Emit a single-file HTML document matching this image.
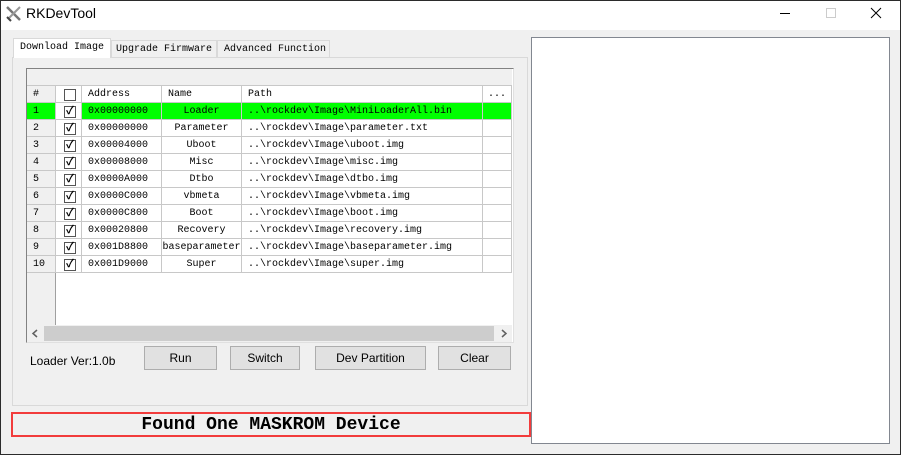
<!DOCTYPE html>
<html><head><meta charset="utf-8"><style>
*{margin:0;padding:0;box-sizing:border-box}
body{width:901px;height:455px;overflow:hidden;background:#f0f0f0;position:relative;font-family:"Liberation Sans",sans-serif}
.a{position:absolute}
.mono{font-family:"Liberation Mono","Noto Sans CJK SC",monospace;font-size:10px;color:#000}
.row{position:absolute;left:27px;width:485px;height:17px}
.c{position:absolute;top:0;height:17px;line-height:17px;border-right:1px solid #c8c8c8;border-bottom:1px solid #c8c8c8;white-space:nowrap;overflow:hidden}
.cb{position:absolute;left:9px;top:3px;width:12px;height:12px;border:1px solid #555;background:#fff;font-size:11px;line-height:10px;text-align:center;font-weight:bold}
.btn{position:absolute;top:346px;height:24px;background:#e1e1e1;border:1px solid #adadad;font-size:12px;text-align:center;line-height:22px;color:#000}
</style></head><body>
<div class="a" style="left:0;top:0;width:901px;height:455px;border:1px solid #2b2b2b"></div>
<div class="a" style="left:1px;top:1px;width:899px;height:29px;background:#fff"></div>
<svg class="a" style="left:5px;top:5px" width="18" height="18" viewBox="0 0 18 18"><path d="M2 2 L15 15" stroke="#777" stroke-width="2.5"/><path d="M15 2 L3 14" stroke="#999" stroke-width="2"/><path d="M2 12 l4 4" stroke="#444" stroke-width="2"/></svg>
<div class="a" style="left:26px;top:5px;font-size:14px;color:#000">RKDevTool</div>
<div class="a" style="left:780px;top:13px;width:10px;height:1px;background:#000"></div>
<div class="a" style="left:826px;top:8px;width:10px;height:10px;border:1px solid #ccc"></div>
<svg class="a" style="left:870px;top:7px" width="12" height="12"><path d="M1 1L11 11M11 1L1 11" stroke="#000" stroke-width="1"/></svg>
<div class="a" style="left:12px;top:57px;width:516px;height:349px;border:1px solid #d9d9d9;background:#f0f0f0"></div>
<div class="a mono" style="left:13px;top:38px;width:98px;height:20px;background:#fff;border:1px solid #d9d9d9;border-bottom:none;line-height:18px;padding-left:6px">Download Image</div>
<div class="a mono" style="left:111px;top:40px;width:106px;height:17px;border:1px solid #d9d9d9;border-bottom:none;line-height:17px;padding-left:4px">Upgrade Firmware</div>
<div class="a mono" style="left:217px;top:40px;width:113px;height:17px;border:1px solid #d9d9d9;border-bottom:none;line-height:17px;padding-left:6px">Advanced Function</div>
<div class="a" style="left:26px;top:68px;width:488px;height:275px;border:1px solid #828282;border-right-color:#e0e0e0;border-bottom-color:#e0e0e0;background:#fff"></div>
<div class="a" style="left:27px;top:69px;width:485px;height:17px;background:#f0f0f0;border-bottom:1px solid #c8c8c8"></div>
<div class="a" style="left:27px;top:86px;width:29px;height:239px;background:#f0f0f0;border-right:1px solid #a0a0a0"></div>
<div class="row mono" style="top:86px">
<div class="c" style="left:0;width:29px;padding-left:6px">#</div>
<div class="c" style="left:29px;width:26px;background:#fff"><div class="cb" style="left:8px"></div></div>
<div class="c" style="left:55px;width:80px;padding-left:6px;background:#fff">Address</div>
<div class="c" style="left:135px;width:80px;padding-left:6px;background:#fff">Name</div>
<div class="c" style="left:215px;width:241px;padding-left:6px;background:#fff">Path</div>
<div class="c" style="left:456px;width:29px;text-align:center;background:#fff">...</div>
</div>
<div id="rows"></div>
<div class="a" style="left:27px;top:325px;width:485px;height:17px;background:#f0f0f0"></div>
<div class="a" style="left:44px;top:326px;width:450px;height:15px;background:#cdcdcd"></div>
<svg class="a" style="left:31px;top:329px" width="8" height="9"><path d="M6 1L2 4.5L6 8" stroke="#606060" stroke-width="1.5" fill="none"/></svg>
<svg class="a" style="left:500px;top:329px" width="8" height="9"><path d="M2 1L6 4.5L2 8" stroke="#606060" stroke-width="1.5" fill="none"/></svg>
<div class="a" style="left:30px;top:354px;font-size:12px">Loader Ver:1.0b</div>
<div class="btn" style="left:144px;width:73px">Run</div>
<div class="btn" style="left:230px;width:70px">Switch</div>
<div class="btn" style="left:315px;width:111px">Dev Partition</div>
<div class="btn" style="left:438px;width:73px">Clear</div>
<div class="a" style="left:11px;top:412px;width:520px;height:25px;border:2px solid #f23c3c;text-align:center;font-family:'Liberation Mono',monospace;font-weight:bold;font-size:18px;line-height:23px">Found One MASKROM Device</div>
<div class="a" style="left:531px;top:37px;width:359px;height:407px;background:#fff;border:1px solid #828790"></div>
<script>
var d=[["1","0x00000000","Loader","..\\rockdev\\Image\\MiniLoaderAll.bin"],["2","0x00000000","Parameter","..\\rockdev\\Image\\parameter.txt"],["3","0x00004000","Uboot","..\\rockdev\\Image\\uboot.img"],["4","0x00008000","Misc","..\\rockdev\\Image\\misc.img"],["5","0x0000A000","Dtbo","..\\rockdev\\Image\\dtbo.img"],["6","0x0000C000","vbmeta","..\\rockdev\\Image\\vbmeta.img"],["7","0x0000C800","Boot","..\\rockdev\\Image\\boot.img"],["8","0x00020800","Recovery","..\\rockdev\\Image\\recovery.img"],["9","0x001D8800","baseparameter","..\\rockdev\\Image\\baseparameter.img"],["10","0x001D9000","Super","..\\rockdev\\Image\\super.img"]];
var h="";d.forEach(function(r,i){var bg=i==0?"#00ff00":"#fff";var bg0=i==0?"#00ff00":"#f0f0f0";
h+='<div class="row mono" style="top:'+(103+i*17)+'px">'+
'<div class="c" style="left:0;width:29px;padding-left:6px;background:'+bg0+'">'+r[0]+'</div>'+
'<div class="c" style="left:29px;width:26px;background:#fff"><div class="cb" style="left:8px">&#10003;</div></div>'+
'<div class="c" style="left:55px;width:80px;padding-left:6px;background:'+bg+'">'+r[1]+'</div>'+
'<div class="c" style="left:135px;width:80px;text-align:center;background:'+bg+'">'+r[2]+'</div>'+
'<div class="c" style="left:215px;width:241px;padding-left:6px;background:'+bg+'">'+r[3]+'</div>'+
'<div class="c" style="left:456px;width:29px;background:'+bg+'"></div></div>';});
document.getElementById("rows").innerHTML=h;
</script>
</body></html>
